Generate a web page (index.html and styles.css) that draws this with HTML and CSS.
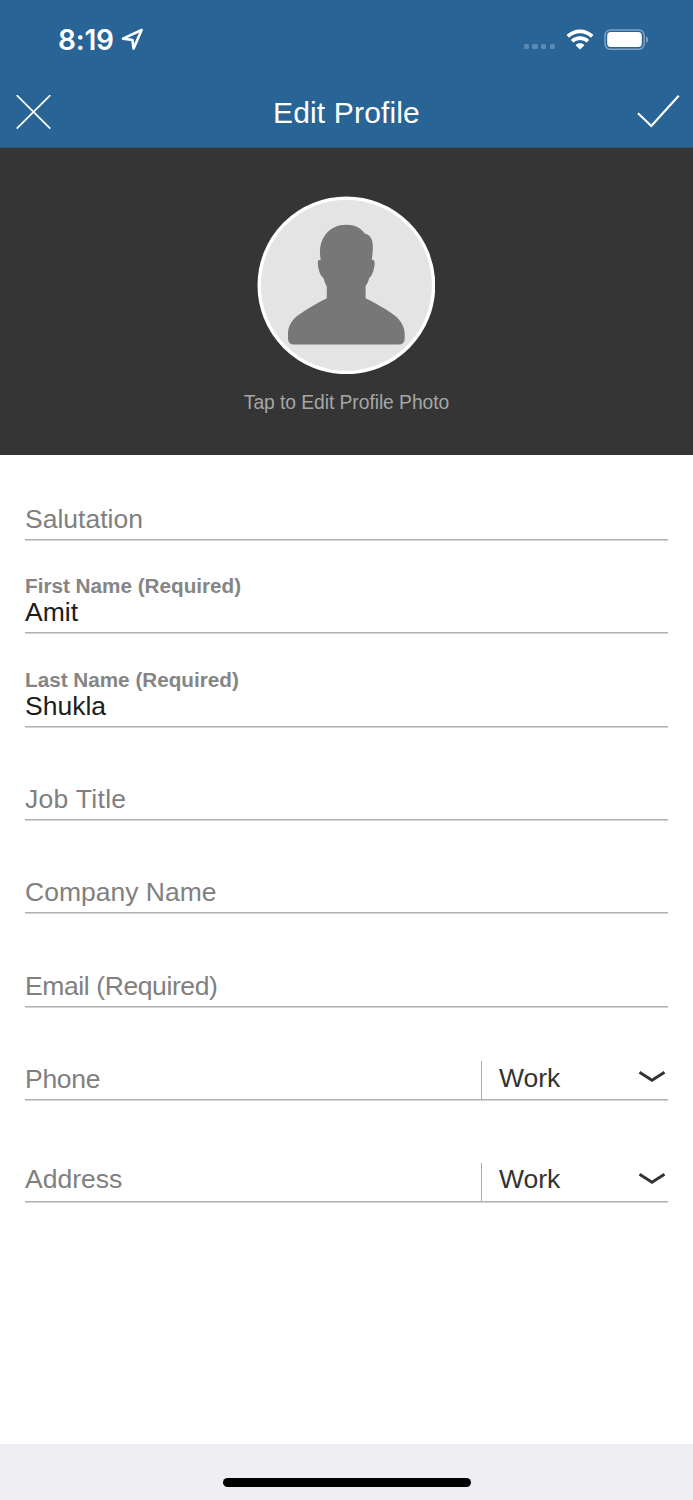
FILE: index.html
```html
<!DOCTYPE html>
<html lang="en">
<head>
    <meta charset="UTF-8">
    <meta name="viewport" content="width=device-width, initial-scale=1.0">
    <title>Edit Profile</title>
    <link rel="stylesheet" href="styles.css">
</head>
<body>
    <header class="header">
        <div class="status-bar">
            <div class="clock">
                <span class="time">8:19</span>
                <svg width="24" height="24" viewBox="0 0 24 24">
                    <path d="M20.6 2 L2 10.6 L11.4 12 L12.6 20.6 Z" fill="none" stroke="#fff" stroke-width="2.6" stroke-linejoin="round"/>
                </svg>
            </div>
            <div class="indicators">
                <div class="signal"><i></i><i></i><i></i><i></i></div>
                <svg class="wifi" width="28" height="22" viewBox="0 0 28 22">
                    <g fill="none" stroke="#fff" stroke-width="3.7">
                        <path d="M1.8 7.4 C8.6 0.6 19.4 0.6 26.2 7.4"/>
                        <path d="M6.1 12.2 C10.4 8 17.6 8 21.9 12.2"/>
                    </g>
                    <path d="M14 20.6 L9.6 16.2 C12 13.6 16 13.6 18.4 16.2 Z" fill="#fff"/>
                </svg>
                <svg width="46" height="22" viewBox="0 0 46 22">
                    <rect x="1" y="0.9" width="39.2" height="19.4" rx="5.6" fill="none" stroke="#7ea3c3" stroke-width="1.5"/>
                    <rect x="3.2" y="3.1" width="34.6" height="15" rx="3.6" fill="#fff"/>
                    <path d="M42 7.2 C44.9 8.4 44.9 12.8 42 14 Z" fill="#7ea3c3"/>
                </svg>
            </div>
        </div>
        <div class="nav-bar">
            <svg width="36" height="36" viewBox="0 0 36 36">
                <path d="M0.7 0.2 L34.3 33.6 M34.3 0.2 L0.7 33.6" stroke="#fff" stroke-width="1.8"/>
            </svg>
            <h1 class="title">Edit Profile</h1>
            <svg width="43" height="36" viewBox="0 0 43 36">
                <path d="M1 18.2 L14.3 31 L41.7 0.8" fill="none" stroke="#fff" stroke-width="2.2"/>
            </svg>
        </div>
    </header>

    <section class="photo">
        <svg class="avatar" width="178" height="178" viewBox="0 0 178 178">
            <circle cx="89.4" cy="89.3" r="87.2" fill="#e4e4e4" stroke="#fff" stroke-width="3.4"/>
            <path d="M89.5 28.8 C97.5 28.8 104 32 108 37.8 C114.5 39 116.2 45.5 115.8 53 C115.7 57 115.3 60 114.8 63.8 C118.3 63.5 118 67.5 117 72 C116 77 114.5 80.5 112.2 82 C111.5 85 110.3 88 108.6 90 V102.2 C118 107 129 113 137 119 C144 124.3 147.7 131 147.7 138.5 V142.5 Q147.7 148.6 141.5 148.6 H37 Q31 148.6 31 142.5 V138 C31 130 35 123.8 41.5 119 C50 112.7 60 107.2 69.8 102.2 V90.4 C68 87.5 67.2 84.5 66.4 82 C64 80.5 62 76 61.2 71 C60.5 66 60.3 63.7 63.8 63.8 C61.8 55 63 45.5 68.5 38.5 C73.5 32 81 28.8 89.5 28.8 Z" fill="#777"/>
        </svg>
        <p class="photo-hint">Tap to Edit Profile Photo</p>
    </section>

    <main class="form">
        <div class="field"><span class="placeholder">Salutation</span></div>
        <div class="field">
            <span class="label">First Name (Required)</span>
            <span class="value">Amit</span>
        </div>
        <div class="field">
            <span class="label">Last Name (Required)</span>
            <span class="value">Shukla</span>
        </div>
        <div class="field"><span class="placeholder job">Job Title</span></div>
        <div class="field"><span class="placeholder">Company Name</span></div>
        <div class="field"><span class="placeholder email">Email (Required)</span></div>
        <div class="field split">
            <span class="placeholder phone">Phone</span>
            <div class="type">
                <span class="work">Work</span>
                <svg width="28" height="14" viewBox="0 0 28 14">
                    <path d="M1.5 2.2 L14 10.2 L26.5 2.2" fill="none" stroke="#333" stroke-width="2.9"/>
                </svg>
            </div>
        </div>
        <div class="field split address">
            <span class="placeholder">Address</span>
            <div class="type">
                <span class="work">Work</span>
                <svg width="28" height="14" viewBox="0 0 28 14">
                    <path d="M1.5 2.2 L14 10.2 L26.5 2.2" fill="none" stroke="#333" stroke-width="2.9"/>
                </svg>
            </div>
        </div>
    </main>

    <footer class="home-bar">
        <div class="home-indicator"></div>
    </footer>
</body>
</html>
```
FILE: styles.css
```css
* {
    box-sizing: border-box;
}
body {
    margin: 0;
    height: 1500px;
    display: flex;
    flex-direction: column;
    background: #fff;
    font-family: "Liberation Sans", Arial, sans-serif;
}
svg {
    display: block;
    flex-shrink: 0;
}
.header {
    height: 148px;
    background: #286496;
    border-bottom: 1px solid #2d536f;
    color: #fff;
}
.status-bar {
    height: 78px;
    padding: 2px 43px 0 58px;
    display: flex;
    align-items: center;
    justify-content: space-between;
}
.clock {
    display: flex;
    align-items: center;
    gap: 7px;
}
.time {
    width: 56px;
    font-family: Inter, sans-serif;
    font-size: 28px;
    font-weight: 600;
    line-height: 34px;
    letter-spacing: -0.2px;
    white-space: nowrap;
}
.indicators {
    display: flex;
    align-items: center;
}
.signal {
    display: flex;
    gap: 3.4px;
    padding-top: 13px;
    margin-right: 11px;
}
.signal i {
    width: 5.3px;
    height: 5.3px;
    border-radius: 1.6px;
    background: #5d8ab0;
}
.wifi {
    margin-right: 10px;
}
.nav-bar {
    height: 69px;
    padding: 0 13px 0 16px;
    display: grid;
    grid-template-columns: 43px 1fr 43px;
    align-items: center;
}
.title {
    margin: 0;
    padding-right: 3px;
    text-align: center;
    font-size: 30px;
    font-weight: normal;
    line-height: 36px;
    letter-spacing: 0.15px;
}
.photo {
    height: 307px;
    padding-top: 48px;
    display: flex;
    flex-direction: column;
    align-items: center;
    background: #353535;
}
.avatar {
    margin-right: 1px;
}
.photo-hint {
    margin: 16px 0 0;
    color: #a6a6a6;
    font-size: 19.3px;
    line-height: 25px;
    letter-spacing: -0.06px;
}
.form {
    flex: 1;
    padding: 21px 25px 0;
    display: flex;
    flex-direction: column;
    gap: 29.33px;
}
.field {
    height: 64px;
    padding-bottom: 5px;
    display: flex;
    flex-direction: column;
    justify-content: flex-end;
    border-bottom: 1px solid #b2b2b2;
    box-shadow: 0 1px #d3d3d3;
    color: #1c1c1c;
    font-size: 26.5px;
    line-height: 30px;
}
.placeholder {
    color: #808080;
}
.job {
    letter-spacing: 0.3px;
}
.email {
    letter-spacing: -0.4px;
}
.phone {
    letter-spacing: -0.3px;
}
.label {
    color: #858585;
    font-size: 20.7px;
    font-weight: bold;
    line-height: 22px;
}
.split {
    padding-bottom: 0;
    flex-direction: row;
    align-items: flex-end;
    justify-content: space-between;
}
.split .placeholder {
    padding-bottom: 5px;
}
.type {
    width: 187px;
    height: 38px;
    padding: 0 2px 5px 17px;
    display: flex;
    align-items: center;
    justify-content: space-between;
    border-left: 1px solid #aaa;
    color: #333;
}
.work {
    margin-top: 2px;
}
.address {
    margin-top: 9px;
}
.address .placeholder {
    padding-bottom: 7px;
}
.address .type {
    padding-bottom: 7px;
}
.address .work {
    margin-top: 0;
}
.home-bar {
    height: 56px;
    padding-top: 34px;
    background: #efeef3;
}
.home-indicator {
    width: 248px;
    height: 9px;
    margin: 0 auto;
    border-radius: 5px;
    background: #000;
}
```
